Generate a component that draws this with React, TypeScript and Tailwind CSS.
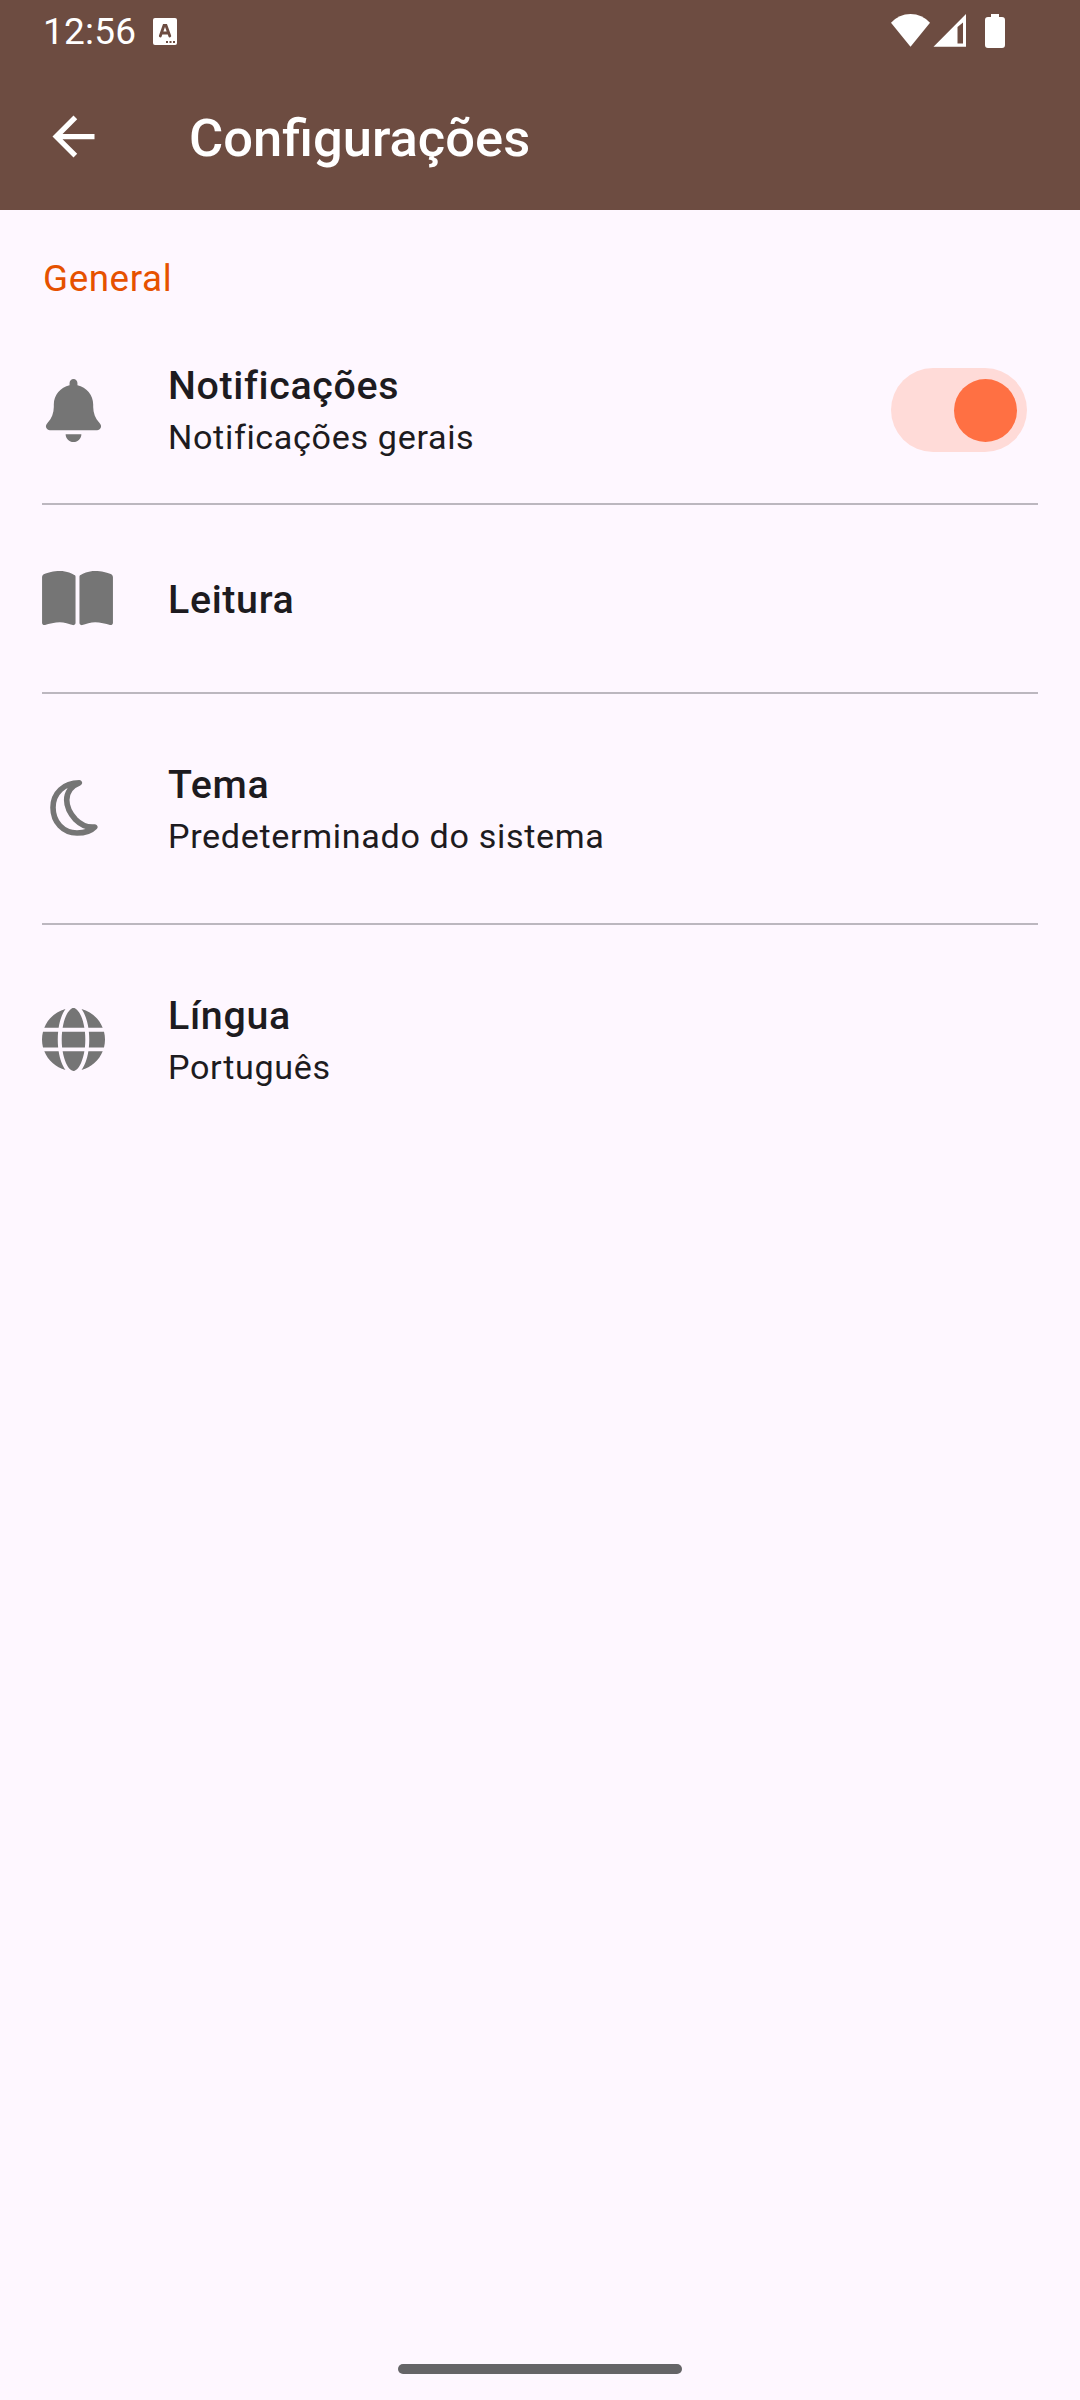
import React from "react";
import { FaBell, FaBookOpen, FaGlobe } from "react-icons/fa6";
import { MdArrowBack } from "react-icons/md";

function StatusBar() {
  return (
    <div className="flex h-[62px] items-center pl-[43px] pr-[75px]">
      <span className="w-[110px] pt-0.5 text-[37px] leading-[62px] tracking-[0.2px]">12:56</span>
      <svg viewBox="0 0 24 27" className="mt-px h-[27px] w-6" fill="#fff">
        <rect width="24" height="27" rx="2" />
        <path d="M7.3 18 11 7.500h2l3.800 10.500M8.500 15h7" fill="none" stroke="#6d4c41" strokeWidth="2.8" strokeLinecap="round" />
        <path d="M13 24h2M16.5 24h2M20 24h2" stroke="#6d4c41" strokeWidth="2" />
      </svg>
      <svg viewBox="0 0 115 36" className="ml-auto h-[36px] w-[115px]" fill="#fff">
        <path d="M1 9.8Q9 1 20.500 1T40 9.8L20.500 33.800Z" />
        <path fillRule="evenodd" d="M43.5 33.800 76 1V33.800ZM67.500 14V30.5H73V9.5Z" />
        <path d="M101 1h8v3h3q3 0 3 3v25q0 3-3 3H98q-3 0-3-3V7q0-3 3-3h3Z" />
      </svg>
    </div>
  );
}

function MoonIcon() {
  return (
    <svg viewBox="0 0 48 56" className="mb-px ml-2 h-14 w-12" fill="none" stroke="#757575" strokeWidth="5.6" strokeLinejoin="round">
      <path d="M29.3 2.8C14 2.8 3 13 3 27.5C3 42 13 53 27 53C34 53 40.5 51.5 44.7 47C36 48 30 44 25.5 39.5C19.5 33 16.7 26 16.7 20C16.7 13 21 6 29.3 2.8Z" />
    </svg>
  );
}

type RowProps = { icon: React.ReactNode; title: string; subtitle?: string; height: string; last?: boolean; children?: React.ReactNode };

function Row({ icon, title, subtitle, height, last, children }: RowProps) {
  return (
    <div className={`flex items-center ${height} ${last ? "" : "border-b-2 border-[#bcb7bf]"}`}>
      <div className="flex w-[126px] items-center text-[#757575]">{icon}</div>
      <div className={`flex flex-col ${subtitle ? "" : "pt-0.5"}`}>
        <span className="text-[39.375px] font-medium leading-[54px] tracking-[0.66px]">{title}</span>
        {subtitle && <span className="text-[34.125px] leading-[48px] tracking-[0.66px]">{subtitle}</span>}
      </div>
      {children}
    </div>
  );
}

export default function App() {
  return (
    <div className="flex h-[2400px] w-[1080px] flex-col bg-[#fef7ff] font-['Roboto',sans-serif] text-[#1d1b20]">
      <header className="h-[210px] bg-[#6d4c41] text-white">
        <StatusBar />
        <div className="flex h-[148px] items-center pl-[42px]">
          <MdArrowBack size={63} />
          <h1 className="ml-[84px] pt-[3px] text-[52.5px] font-medium leading-[68px]">Configurações</h1>
        </div>
      </header>
      <main className="flex flex-1 flex-col px-[42px]">
        <h2 className="mt-[43px] h-[51px] pl-px text-[36.75px] leading-[52px] tracking-[0.6px] text-[#e65100]">General</h2>
        <Row icon={<FaBell size={63} />} title="Notificações" subtitle="Notificações gerais" height="h-[201px] pt-[13px]">
          <button aria-label="Notificações gerais" className="ml-auto mr-[11px] flex h-[84px] w-[136px] items-center justify-end rounded-full bg-[#ffdbd8] pr-[10px]">
            <span className="size-[63px] rounded-full bg-[#ff7043]" />
          </button>
        </Row>
        <Row icon={<FaBookOpen className="h-[63px] w-[71px]" />} title="Leitura" height="h-[189px]" />
        <Row icon={<MoonIcon />} title="Tema" subtitle="Predeterminado do sistema" height="h-[231px]" />
        <Row icon={<FaGlobe size={63} />} title="Língua" subtitle="Português" height="h-[229px]" last />
      </main>
      <div className="mb-[26px] h-[10px] w-[284px] self-center rounded-full bg-[#656467]" />
    </div>
  );
}
